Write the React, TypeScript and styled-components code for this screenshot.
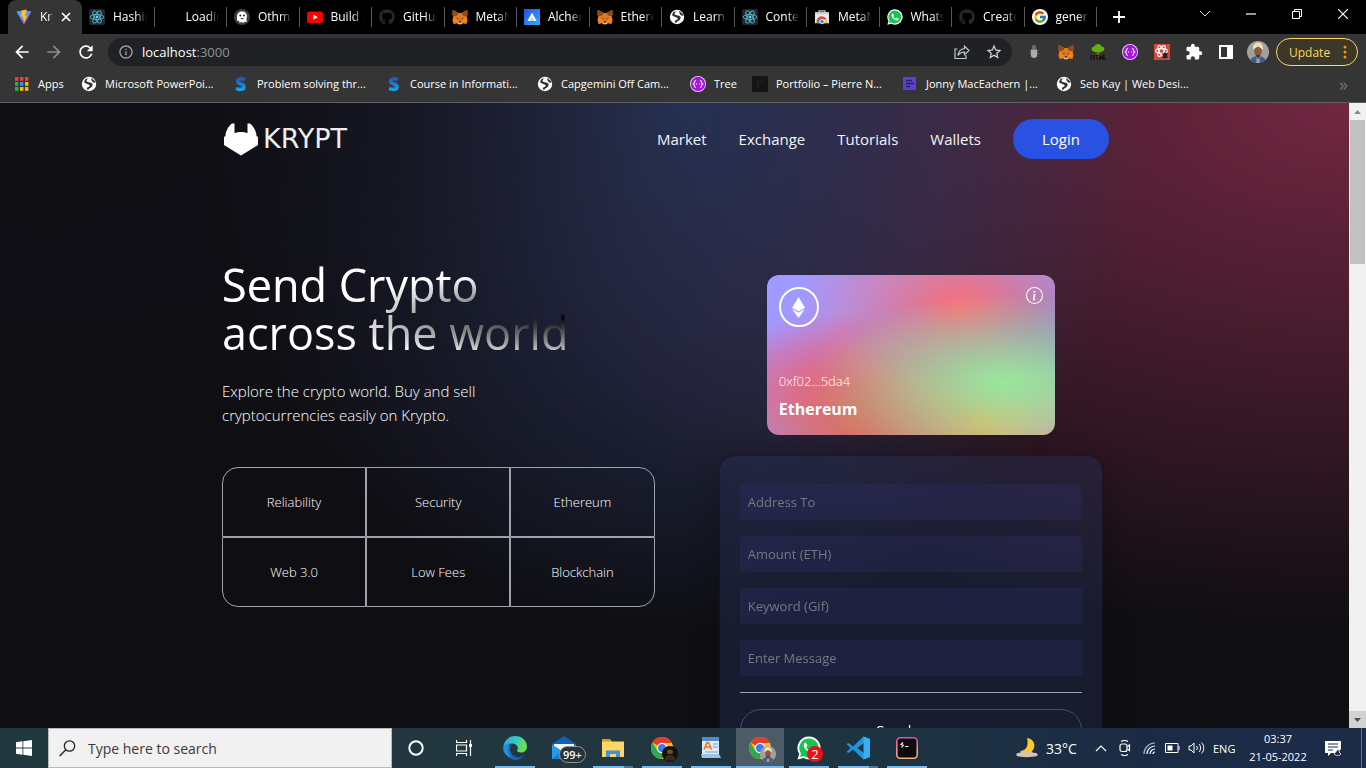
import React from "react";
import styled, { createGlobalStyle, css } from "styled-components";
import { MdArrowBack, MdArrowForward, MdExtension, MdInfoOutline, MdRefresh, MdStarBorder } from "react-icons/md";
import { FaGithub } from "react-icons/fa";
import { FcGoogle } from "react-icons/fc";
import { BsInfoCircle } from "react-icons/bs";
import { SiEthereum } from "react-icons/si";

const GlobalStyle = createGlobalStyle`
  * { box-sizing: border-box; }
  html, body { margin: 0; padding: 0; }
  body {
    background: #0f0e13;
    font-family: "Open Sans", "Noto Sans", sans-serif;
    color: #fff;
    overflow: hidden;
  }
  button, input { font: inherit; color: inherit; }
  button { padding: 0; border: 0; background: none; }
  a { color: inherit; text-decoration: none; }
  ul { list-style: none; margin: 0; padding: 0; }
  svg { display: block; flex: none; }
`;

/* ---------- icons ---------- */

type IconProps = { size?: number };

const ViteIcon = ({ size = 16 }: IconProps) => (
  <svg width={size} height={size} viewBox="0 0 16 16">
    <defs>
      <linearGradient id="vite" x1="0" y1="0" x2="0.6" y2="1">
        <stop offset="0" stopColor="#41b5f5" />
        <stop offset="1" stopColor="#a855f7" />
      </linearGradient>
    </defs>
    <path d="M0.5 2.5 8 1.5l7.5 1L8 15.5z" fill="url(#vite)" />
    <path d="M10.8 0.5 5.6 1.6 5.2 8l2-.4-.5 3.2 1.4-.5-.3 3.7 3.4-7.4-2.1.4z" fill="#ffc61a" />
  </svg>
);

const ReactIcon = ({ size = 16 }: IconProps) => (
  <svg width={size} height={size} viewBox="0 0 16 16">
    <rect width="16" height="16" rx="2" fill="#24282c" />
    <g fill="none" stroke="#4fb6cf" strokeWidth="0.9">
      <ellipse cx="8" cy="8" rx="6.8" ry="2.6" />
      <ellipse cx="8" cy="8" rx="6.8" ry="2.6" transform="rotate(60 8 8)" />
      <ellipse cx="8" cy="8" rx="6.8" ry="2.6" transform="rotate(120 8 8)" />
    </g>
    <circle cx="8" cy="8" r="1.4" fill="#61dafb" />
  </svg>
);

const GhostIcon = () => (
  <svg width="16" height="16" viewBox="0 0 16 16">
    <circle cx="8" cy="8" r="8" fill="#3d4043" />
    <path d="M3 8c0-3.4 2-5.4 5-5.4s5 2 5 5.4l-.6 1.6.4 3.6-2-.8-1.4 1.6L7.6 13l-2 1-.6-2.6L3 12z" fill="#fff" />
    <circle cx="6.3" cy="6.6" r="1" fill="#222" />
    <circle cx="10" cy="6.6" r="1" fill="#222" />
    <path d="M6.4 9h3.4l-1.6 1.4z" fill="#222" />
  </svg>
);

const YoutubeIcon = () => (
  <svg width="16" height="16" viewBox="0 0 16 16">
    <rect y="2.5" width="16" height="11.5" rx="2.6" fill="#f00" />
    <path d="M6.3 5.6v5.2L10.8 8.2z" fill="#fff" />
  </svg>
);

const FoxIcon = ({ size = 16 }: IconProps) => (
  <svg width={size} height={size} viewBox="0 0 16 16">
    <path d="M0.8 0.8 6.4 4h3.2l5.6-3.2.4 4.6-.9 2.2.9 3.6-1.2 4-3.4-1-1.4 1.2H6.4L5 14.2l-3.4 1-1.2-4 .9-3.6L.4 5.4z" fill="#e2761b" />
    <path d="M0.8 0.8 6.4 4 5 6.4 1.4 7.2.4 5.4zM15.2.8 9.6 4 11 6.4l3.6.8 1-1.8z" fill="#8c4a1d" />
    <path d="M1.6 8.4 5 10.4l1.4 4.2L1.6 13zM14.4 8.4 11 10.4l-1.4 4.2 4.8-1.6z" fill="#f6851b" />
    <path d="M4 8.8l2.4.6.2 1.2zM12 8.8l-2.4.6-.2 1.2z" fill="#2b2f3a" />
    <path d="M6.2 12.4h3.6l.2 1.8-.8.8H6.8l-.8-.8z" fill="#d7c1b3" />
    <path d="M6.8 12.2h2.4l.2 1.2H6.6z" fill="#161616" />
  </svg>
);

const AlchemyIcon = () => (
  <svg width="16" height="16" viewBox="0 0 16 16">
    <defs>
      <linearGradient id="alchemy" x1="0" y1="0" x2="1" y2="1">
        <stop offset="0" stopColor="#2f49f0" />
        <stop offset="1" stopColor="#22b4f5" />
      </linearGradient>
    </defs>
    <rect width="16" height="16" fill="url(#alchemy)" />
    <path d="M8 3.4 12.6 12h-3L8 8.6 6.4 12h-3z" fill="#fff" />
    <path d="M6 12 8 8.8l2 3.2z" fill="#b8d4ff" />
  </svg>
);

const GlobeIcon = ({ size = 16 }: IconProps) => (
  <svg width={size} height={size} viewBox="0 0 16 16">
    <circle cx="8" cy="8" r="7.2" fill="#fff" />
    <path d="M8.4 2.4c-2 .2-3.2 1.6-2.8 3l2.2.8c1.4.2 3.2.4 3.8 1.8.2 2-1 3.6-3.4 4.4l-.8 1.4-1.6-.4.4-2 2.6-1.2-.6-1.4-4.8-2-.2-1.4 1.4-2.6z" fill="#303236" />
    <path d="M10.2 1.8 14 5.2l.4 1.6-2.2-.4-1.6-1.6z" fill="#303236" />
  </svg>
);

const StoreIcon = () => (
  <svg width="16" height="16" viewBox="0 0 16 16">
    <path d="M5 3.4V1.8h6v1.6" fill="none" stroke="#c8cacd" strokeWidth="1.2" />
    <path d="M1 3.2h14v11H1z" fill="#e8eaed" />
    <path d="M1 3.2h14v2H1z" fill="#c9ccd1" />
    <path d="M3 14.2a5 5 0 0 1 9.6-3.6H8z" fill="#ea4335" />
    <path d="M3.2 10 6 14.2H3a5 5 0 0 1 .2-4.2z" fill="#34a853" />
    <path d="M12.6 10.6a5 5 0 0 1 .4 3.6H9.4z" fill="#fbbc05" />
    <circle cx="8" cy="12.6" r="2.2" fill="#4285f4" stroke="#fff" strokeWidth="0.8" />
  </svg>
);

const WhatsappIcon = ({ size = 16 }: IconProps) => (
  <svg width={size} height={size} viewBox="0 0 24 24">
    <path d="M12 0.4A11.5 11.5 0 0 0 2.2 17.9L0.5 23.6l6-1.6A11.5 11.5 0 1 0 12 .4z" fill="#fff" />
    <path d="M12 2.4A9.6 9.6 0 0 0 4 17.4l-1 3.7 3.8-1A9.6 9.6 0 1 0 12 2.4z" fill="#16c450" />
    <path d="M8.6 6.6c-.9.1-2.1 1.2-1.8 3.2.6 3.4 4.4 6.9 7.9 7.5 1.6.2 3-.9 3.1-2.6l-3.1-1.6-1.5 1.4c-1.8-.6-3.2-2-3.9-3.6l1.2-1.5z" fill="#fff" />
  </svg>
);

const GoogleBadge = () => (
  <svg width="16" height="16" viewBox="0 0 16 16">
    <circle cx="8" cy="8" r="8" fill="#fff" />
    <g transform="translate(1 1)"><FcGoogle size={14} /></g>
  </svg>
);

const AppsIcon = () => (
  <svg width="16" height="14" viewBox="-1 0 16 14">
    {["#ea4335", "#ea4335", "#ea4335", "#34a853", "#4285f4", "#fbbc05", "#34a853", "#fbbc05", "#fbbc05"].map((fill, i) => (
      <rect key={i} x={(i % 3) * 5} y={Math.floor(i / 3) * 5} width="3.4" height="3.8" fill={fill} />
    ))}
  </svg>
);

const SwayIcon = () => (
  <svg width="16" height="16" viewBox="0 0 16 16">
    <defs>
      <linearGradient id="sway" x1="0" y1="0" x2="0" y2="1">
        <stop offset="0" stopColor="#2457b8" />
        <stop offset="1" stopColor="#0fa5ea" />
      </linearGradient>
    </defs>
    <path d="M11.8 3.8C10 2.400 4.800 2 4.600 5.200 4.300 8 11.200 7.600 11 10.800 10.800 14 5.600 13.800 3.200 12.200" fill="none" stroke="url(#sway)" strokeWidth="3.600" />
  </svg>
);

const TreeIcon = () => (
  <svg width="16" height="16" viewBox="0 0 16 16">
    <circle cx="8" cy="8" r="8" fill="#f0d8fb" />
    <circle cx="8" cy="8" r="7.200" fill="#a714e6" />
    <path d="M5.800 4.400c-1.600 0-1 3-2.400 3.600 1.400.6.800 3.600 2.400 3.600M10.200 4.400c1.600 0 1 3 2.400 3.600-1.400.6-.8 3.600-2.400 3.600M6 8h1M9 8h1" fill="none" stroke="#fff" strokeWidth="1.100" />
  </svg>
);

const PortfolioIcon = () => (
  <svg width="16" height="16" viewBox="0 0 16 16">
    <rect width="16" height="16" fill="#151515" />
    <path d="M6 4v8M9 4c2 0 2 3 0 3" stroke="#2c2c2c" fill="none" />
  </svg>
);

const JonnyIcon = () => (
  <svg width="16" height="14" viewBox="-1 0 16 14">
    <rect width="13" height="13" rx="1" fill="#5b3fd6" />
    <path d="M3 3.500h6M3 6.500h8M3 9.500h4" stroke="#26244a" strokeWidth="1.600" />
  </svg>
);

const ShareIcon = () => (
  <svg width="18" height="18" viewBox="0 0 18 18" fill="none" stroke="#c4c7c9" strokeWidth="1.200">
    <path d="M4.500 6H2v9.500h11V12" />
    <path d="M11.500 3.200 16 7.500l-4.500 4.200V9.200C8.500 9.200 6.500 10.200 5 12.500c.4-4 3-6.600 6.500-7z" />
  </svg>
);

const BugIcon = () => (
  <svg width="16" height="16" viewBox="0 0 16 16">
    <path d="M3 6.500h10M2.500 9.500h11M4 12.500h8" stroke="#4b4d50" />
    <circle cx="8" cy="3.200" r="2.200" fill="#6c6e70" />
    <path d="M4.800 5.500h6.400v5c0 2-1.400 3.500-3.200 3.500s-3.200-1.500-3.200-3.500z" fill="#a9abad" />
  </svg>
);

const HtmlTreeIcon = () => (
  <svg width="16" height="16" viewBox="0 0 16 16">
    <path d="M7 6h2l.5 7h-3z" fill="#8a5a2b" />
    <path d="M8 0c2.400 0 3.400 1.400 3.400 2.600 1.800-.2 3 1 3 2.400S13 7.600 11.600 7.400C10.600 9 9 8.600 8 7.800 7 8.800 5 8.800 4.400 7.400 2.800 7.600 1.600 6.600 1.600 5s1.400-2.600 3-2.400C4.600 1.200 6 0 8 0z" fill="#5cb413" />
    <path d="M1 11v5M1 13.500h3M4 11v5M5.500 11.500h3M7 11.500V16M9.500 16v-4l1.500 2 1.500-2v4M14 11v4.500h2" fill="none" stroke="#111" strokeWidth="1.200" />
  </svg>
);

const DevtoolsIcon = () => (
  <svg width="16" height="16" viewBox="0 0 16 16">
    <rect width="16" height="16" fill="#d8453b" />
    <g fill="none" stroke="#fff" strokeWidth="1.100">
      <ellipse cx="7.500" cy="7" rx="6" ry="2.400" />
      <ellipse cx="7.500" cy="7" rx="6" ry="2.400" transform="rotate(60 7.500 7)" />
      <ellipse cx="7.500" cy="7" rx="6" ry="2.400" transform="rotate(120 7.500 7)" />
    </g>
    <ellipse cx="11" cy="11.400" rx="2.200" ry="3" fill="#222" />
    <path d="M7.800 9.500 14 13.500M7.800 13.500 14 9.500" stroke="#222" />
  </svg>
);

const PanelIcon = () => (
  <svg width="14" height="14" viewBox="0 0 14 14">
    <path d="M0 0h14v14H0zM2 2v10h6V2z" fill="#fff" fillRule="evenodd" />
  </svg>
);

const PersonIcon = ({ size = 22 }: IconProps) => (
  <svg width={size} height={size} viewBox="0 0 22 22">
    <defs><clipPath id="person"><circle cx="11" cy="11" r="11" /></clipPath></defs>
    <g clipPath="url(#person)">
      <rect width="22" height="22" fill="#a3a19d" />
      <path d="M3 22c0-5 3.500-7 8-7s8 2 8 7z" fill="#3d5d94" />
      <path d="M9.500 15.500 11 19l1.500-3.500V22h-3z" fill="#b9a596" />
      <ellipse cx="11" cy="10.500" rx="3.800" ry="5" fill="#8b5a3c" />
      <path d="M6 8.500C5.500 4 8 1.500 11 1.500s5.500 2.500 5 7L11 5.500z" fill="#efe0b4" />
      <path d="M8.500 13.500c1.500 1 3.500 1 5 0L11 16.500z" fill="#3c261c" />
    </g>
  </svg>
);

const ChromeIcon = () => (
  <svg width="22" height="22" viewBox="0 0 24 24">
    <circle cx="12" cy="12" r="12" fill="#fbc116" />
    <path d="M12 12 1.600 6A12 12 0 0 1 22.400 6z" fill="#e33b2e" />
    <path d="M1.600 6A12 12 0 0 0 12 24l5-9.200L12 12 6.900 15z" fill="#2da94f" />
    <path d="M22.400 6.500H12L17.200 15 12 24A12 12 0 0 0 22.400 6.500z" fill="#fbc116" />
    <circle cx="12" cy="12" r="5.600" fill="#fff" />
    <circle cx="12" cy="12" r="4.400" fill="#3b7ded" />
  </svg>
);

const DarkPersonIcon = () => (
  <svg width="16" height="16" viewBox="0 0 16 16">
    <circle cx="8" cy="8" r="8" fill="#15110e" />
    <path d="M5 5c1-2 5-2 6 0l-.6 3H5.600z" fill="#6d4a33" />
    <path d="M2.500 13c1-3 3-4 5.500-4s4.500 1 5.500 4l-2 1.500h-7z" fill="#3c2a20" />
  </svg>
);

const EdgeIcon = () => (
  <svg width="24" height="24" viewBox="0 0 24 24">
    <defs>
      <linearGradient id="edgeTop" x1="0" y1="0" x2="1" y2="0.300">
        <stop offset="0" stopColor="#2aa7e8" />
        <stop offset="0.600" stopColor="#37c9c0" />
        <stop offset="1" stopColor="#6be04f" />
      </linearGradient>
      <linearGradient id="edgeLow" x1="0" y1="0" x2="1" y2="1">
        <stop offset="0" stopColor="#1c88d9" />
        <stop offset="1" stopColor="#0f4f9e" />
      </linearGradient>
    </defs>
    <path d="M0.200 11C1 4.500 6 0 12 0c7 0 12 5 12 10.500 0 4-3 6-6 6-2.500 0-4-1-4-2 0-.6.800-1 .8-2.600 0-2-2.200-4.400-5.800-4.400C5 7.500 1.500 9 .2 11z" fill="url(#edgeTop)" />
    <path d="M0.200 11C1.500 8.500 5 7 8.500 7c-2.500 1.500-3 4-3 6 0 6 5 9.500 9.500 9.500A12 12 0 0 1 0 12z" fill="#1f8fe0" />
    <path d="M8.500 9.500C7 11 6.500 13 7 15c1 4 5 6.500 9 6 2-.2 4-1.200 5.600-2.600-1.600 3.600-5.600 5.600-9.600 5.600C6.500 24 5 17 5.500 13.500 5.800 11 7 10 8.500 9.500z" fill="url(#edgeLow)" />
  </svg>
);

const MailIcon = () => (
  <svg width="26" height="24" viewBox="0 0 26 24">
    <path d="M1 8 13 0l12 8v15H1z" fill="#0f64b5" />
    <path d="M3 8h20v9H3z" fill="#f4f8fc" />
    <path d="M1 8.500 13 16 25 8.500V23H1z" fill="#2a9be8" />
    <path d="M1 23 11 14.500 13 16l2-1.500L25 23z" fill="#1a7fd0" />
  </svg>
);

const FolderIcon = () => (
  <svg width="22" height="20" viewBox="0 0 22 20">
    <path d="M0 1h8l2 2.500V7H0z" fill="#dd9a16" />
    <path d="M0 3.500h22V19H0z" fill="#fcd667" />
    <path d="M4 19v-6.500h14V19h-4v-3H8v3z" fill="#3f92d6" />
  </svg>
);

const WordpadIcon = () => (
  <svg width="20" height="22" viewBox="0 0 20 22">
    <rect x="1" y="0" width="17" height="20" fill="#dfebf6" />
    <rect x="1" y="0" width="17" height="4" fill="#4d8fc4" />
    <path d="M3 12.500 6 5.500h1.500l3 7M4.500 10h4.500" stroke="#e8742a" strokeWidth="1.600" fill="none" />
    <path d="M12 7h5M12 10h5M4 15h13" stroke="#6fa3cf" strokeWidth="1.200" />
    <path d="M0 17h18l2 4H1z" fill="#9fc3e0" />
  </svg>
);

const CodeIcon = () => (
  <svg width="24" height="24" viewBox="0 0 24 24">
    <path d="M17.500 0.500 24 3v18l-6.500 2.500L7 13.600 2.600 17 .5 16 4.600 12 .5 8l2.100-1L7 10.400zM18 7l-6.500 5L18 17z" fill="#1f93dc" fillRule="evenodd" />
    <path d="M17.500 0.500 24 3v18l-6.500 2.500z" fill="#3badf2" />
  </svg>
);

const TerminalIcon = () => (
  <svg width="22" height="22" viewBox="0 0 22 22">
    <defs>
      <linearGradient id="term" x1="0" y1="0" x2="0" y2="1">
        <stop offset="0" stopColor="#f048a8" />
        <stop offset="1" stopColor="#f2b27a" />
      </linearGradient>
    </defs>
    <rect x="0.800" y="0.800" width="20.400" height="20.400" rx="3.500" fill="#0c0c10" stroke="url(#term)" strokeWidth="1.600" />
    <path d="M7 5.500 5 7.500l2.400.8L5.400 10.500M9 9.500h3.500" stroke="#fff" strokeWidth="1.100" fill="none" />
  </svg>
);

const LogoMark = () => (
  <svg width="34" height="33" viewBox="0 0 34 33">
    <path d="M8 0.500h2.500v9.500C14 8.500 20 8.500 23.500 10V.5H26c3.500 2.500 6.500 8 6.500 12.500l1.500 1v8L17 32.500 0 22v-8l1.500-1C1.500 8.500 4.500 3 8 .5z" fill="#fff" />
  </svg>
);

/* ---------- browser frame ---------- */

const Screen = styled.div`
  height: 100vh;
  display: flex;
  flex-direction: column;
  overflow: hidden;
`;

const TabStrip = styled.header`
  display: flex;
  align-items: stretch;
  height: 34px;
  padding-left: 8px;
  background: #000;
`;

const Tabs = styled.ul`
  display: flex;
  flex: 1;
  max-width: 1089px;
`;

const Tab = styled.li<{ $active?: boolean }>`
  display: flex;
  align-items: center;
  gap: 8px;
  min-width: 0;
  position: relative;
  ${(p) =>
    p.$active
      ? css`
          flex: none;
          width: 74px;
          padding: 0 11px 0 8px;
          background: #353535;
          border-radius: 8px 8px 0 0;
        `
      : css`
          flex: 1 1 0;
          padding: 0 8px 0 7px;
          &::after {
            content: "";
            position: absolute;
            right: 0;
            top: 7px;
            width: 1px;
            height: 20px;
            background: #55585c;
          }
        `}
`;

const TabLink = styled.a`
  flex: 1;
  min-width: 0;
  overflow: hidden;
  white-space: nowrap;
  font-size: 12px;
  line-height: 16px;
  mask-image: linear-gradient(90deg, #000 65%, transparent);
`;

const TabIconSlot = styled.span`
  width: 16px;
  height: 16px;
  flex: none;
`;

const IconButton = styled.button<{ $w?: number }>`
  display: flex;
  align-items: center;
  justify-content: center;
  flex: none;
  width: ${(p) => p.$w ?? 32}px;
`;

const WindowControls = styled.div`
  display: flex;
  height: 28px;
  margin-left: auto;
`;

const Toolbar = styled.div`
  display: flex;
  align-items: center;
  height: 36px;
  padding: 0 8px 0 6px;
  background: #353535;
`;

const AddressBar = styled.form`
  display: flex;
  flex: 1;
  align-items: center;
  gap: 8px;
  height: 28px;
  margin: 0 6px;
  padding: 0 6px 0 10px;
  border-radius: 14px;
  background: #202124;
`;

const AddressField = styled.label`
  position: relative;
  flex: 1;
  font-size: 13px;
  line-height: 20px;
`;

const AddressInput = styled.input`
  width: 100%;
  border: 0;
  outline: 0;
  padding: 0;
  background: none;
  color: transparent;
  caret-color: #fff;
  line-height: 20px;
`;

const AddressText = styled.span`
  position: absolute;
  inset: 0;
  pointer-events: none;
  span { color: #8f9295; }
`;

const UpdateButton = styled.button`
  display: flex;
  align-items: center;
  justify-content: space-between;
  width: 82px;
  height: 28px;
  margin-left: 2px;
  padding: 0 10px 0 12px;
  border: 1px solid #fdd663;
  border-radius: 14px;
  background: #3c3729;
  color: #fdd663;
  font-size: 12px;
`;

const BookmarkBar = styled.nav`
  display: flex;
  align-items: center;
  height: 33px;
  padding: 0 18px 4px 14px;
  border-bottom: 1px solid #5f6062;
  background: #353535;
`;

const Bookmark = styled.a<{ $w: number }>`
  display: flex;
  align-items: center;
  gap: 8px;
  width: ${(p) => p.$w}px;
  flex: none;
  white-space: nowrap;
  font-size: 11px;
  font-weight: 500;
  line-height: 16px;
`;

const Chevrons = styled.button`
  margin-left: auto;
  color: #6f7174;
  font-size: 18px;
  line-height: 16px;
`;

/* ---------- page ---------- */

const Viewport = styled.div`
  display: flex;
  flex: 1;
  min-height: 0;
`;

const Page = styled.div`
  flex: 1;
  min-width: 0;
  overflow: hidden;
`;

const Welcome = styled.div`
  background-color: #0f0e13;
  background-image:
    radial-gradient(at 0% 0%, hsl(253, 16%, 7%) 0, transparent 50%),
    radial-gradient(at 50% 0%, hsl(225, 39%, 30%) 0, transparent 50%),
    radial-gradient(at 100% 0%, hsl(339, 49%, 30%) 0, transparent 50%);
`;

const SiteNav = styled.nav`
  display: flex;
  align-items: center;
  justify-content: space-between;
  max-width: 1065px;
  height: 72px;
  margin: 0 auto;
  padding: 0 98px 0 82px;
`;

const Logo = styled.a`
  display: flex;
  align-items: center;
  gap: 5px;
  font-family: "DejaVu Sans", sans-serif;
  font-size: 27px;
  line-height: 32px;
  color: #eee;
`;

const SiteLinks = styled.ul`
  display: flex;
  align-items: center;
  gap: 32px;
  font-size: 15px;
  font-weight: 500;
  line-height: 24px;
  color: #f4f4f6;
`;

const LoginButton = styled.button`
  width: 96px;
  height: 40px;
  border-radius: 20px;
  background: #2952e3;
  color: #fff;
`;

const Hero = styled.main`
  display: flex;
  align-items: flex-start;
  gap: 40px;
  max-width: 1065px;
  margin: 0 auto;
  padding: 80px;
`;

const Column = styled.section<{ $center?: boolean }>`
  display: flex;
  flex: 1 1 0;
  min-width: 0;
  flex-direction: column;
  align-items: ${(p) => (p.$center ? "center" : "flex-start")};
`;

const Title = styled.h1`
  margin: 0;
  padding: 6px 0 2px;
  font-size: 45px;
  font-weight: 400;
  line-height: 48px;
  color: transparent;
  background-color: #fff;
  background-image:
    radial-gradient(at 4% 36%, #fff 0, transparent 53%),
    radial-gradient(at 100% 60%, #000 0, transparent 50%);
  background-clip: text;
  -webkit-background-clip: text;
`;

const Lead = styled.p`
  margin: 20px 0 40px;
  font-size: 15px;
  font-weight: 300;
  line-height: 24px;
`;

const Features = styled.ul`
  display: grid;
  grid-template-columns: repeat(3, 1fr);
  width: 100%;
`;

const Feature = styled.li<{ $corner?: string }>`
  display: flex;
  align-items: center;
  justify-content: center;
  min-height: 70px;
  border: 1px solid #9ca3af;
  border-radius: ${(p) => p.$corner ?? "0"};
  font-size: 13px;
  font-weight: 300;
`;

const EthCard = styled.article`
  display: flex;
  flex-direction: column;
  justify-content: space-between;
  width: 288px;
  height: 160px;
  margin: 20px 0;
  padding: 12px;
  border-radius: 12px;
  background-color: #a099ff;
  background-image:
    radial-gradient(at 83% 67%, rgb(152, 231, 156) 0, transparent 58%),
    radial-gradient(at 67% 20%, hsl(357, 94%, 71%) 0, transparent 59%),
    radial-gradient(at 88% 35%, hsl(222, 81%, 65%) 0, transparent 50%),
    radial-gradient(at 31% 91%, hsl(9, 61%, 61%) 0, transparent 52%),
    radial-gradient(at 27% 71%, hsl(336, 91%, 65%) 0, transparent 49%),
    radial-gradient(at 74% 89%, hsl(30, 98%, 65%) 0, transparent 51%),
    radial-gradient(at 53% 75%, hsl(174, 94%, 68%) 0, transparent 45%);
`;

const CardTop = styled.div`
  display: flex;
  justify-content: space-between;
  align-items: flex-start;
`;

const EthRing = styled.span`
  display: flex;
  align-items: center;
  justify-content: center;
  width: 40px;
  height: 40px;
  border: 2px solid #fff;
  border-radius: 50%;
`;

const Account = styled.p`
  margin: 0;
  font-size: 13px;
  font-weight: 300;
  line-height: 20px;
`;

const CardName = styled.h2`
  margin: 4px 0 0;
  font-size: 16px;
  font-weight: 700;
  line-height: 28px;
`;

const SendForm = styled.form`
  width: 384px;
  max-width: 100%;
  padding: 20px;
  border: 1px solid rgba(0, 0, 0, 0.3);
  border-radius: 16px;
  background: rgba(39, 51, 89, 0.4);
  box-shadow: 0 4px 30px rgba(0, 0, 0, 0.2);
  backdrop-filter: blur(5px);
`;

const Field = styled.input`
  display: block;
  width: 100%;
  height: 36px;
  margin: 8px 0 16px;
  padding: 8px;
  border: 0;
  border-radius: 2px;
  outline: 0;
  background: rgba(45, 51, 106, 0.3);
  font-size: 13px;
  line-height: 20px;
  &::placeholder { color: #757983; opacity: 1; }
`;

const Rule = styled.hr`
  height: 1px;
  margin: 16px 0;
  border: 0;
  background: #9ca3af;
`;

const SendButton = styled.button`
  display: block;
  width: 100%;
  height: 42px;
  border: 1px solid #3d4f7c;
  border-radius: 21px;
  font-size: 15px;
  font-weight: 500;
  line-height: 24px;
`;

const ScrollTrack = styled.aside`
  display: flex;
  flex-direction: column;
  width: 17px;
  flex: none;
  background: #f1f1f1;
`;

const ScrollArrow = styled.button<{ $shade?: boolean }>`
  display: flex;
  align-items: center;
  justify-content: center;
  height: 17px;
  margin-top: ${(p) => (p.$shade ? "auto" : "0")};
  background: ${(p) => (p.$shade ? "#d2d2d2" : "none")};
`;

const ScrollThumb = styled.div`
  height: 23%;
  margin: 0 1px;
  background: #c1c1c1;
`;

/* ---------- taskbar ---------- */

const TaskBar = styled.footer`
  display: flex;
  height: 40px;
  flex: none;
  background: linear-gradient(90deg, #20383e 0%, #22363f 45%, #1d3341 65%, #1b2a45 85%, #1c2b47 100%);
`;

const SearchBox = styled.label`
  display: flex;
  align-items: center;
  gap: 12px;
  width: 344px;
  height: 40px;
  padding: 0 10px;
  border: 1px solid #b9b9b9;
  background: #f1f1f1;
`;

const SearchInput = styled.input`
  flex: 1;
  min-width: 0;
  padding: 0;
  border: 0;
  outline: 0;
  background: none;
  font-size: 14px;
  &::placeholder { color: #3a3a3a; opacity: 1; }
`;

const Apps = styled.div`
  display: flex;
  gap: 1px;
  padding-left: 3px;
`;

const AppButton = styled.button<{ $state?: "open" | "many" | "active" }>`
  position: relative;
  display: flex;
  align-items: center;
  justify-content: center;
  width: 48px;
  background: ${(p) => (p.$state === "active" ? "#4c5c66" : "none")};
  ${(p) =>
    p.$state &&
    css`
      &::after {
        content: "";
        position: absolute;
        bottom: 0;
        left: ${p.$state === "active" ? 0 : 4}px;
        right: ${p.$state === "active" ? 0 : 4}px;
        height: 2px;
        background: ${p.$state === "many" ? "linear-gradient(90deg, #76b9ed 31px, #4b7697 31px)" : "#76b9ed"};
      }
    `}
`;

const FaceBadge = styled.span`
  position: absolute;
  left: 24px;
  top: 18px;
`;

const MailBadge = styled.span`
  position: absolute;
  left: 19px;
  top: 18px;
  padding: 0 3px;
  border: 1px solid #8b979c;
  border-radius: 9px;
  background: #2a3338;
  font-size: 11px;
  font-weight: 600;
  line-height: 15px;
`;

const CountBadge = styled.span`
  position: absolute;
  left: 22px;
  top: 18px;
  width: 16px;
  border-radius: 50%;
  background: #f00c18;
  font-size: 13px;
  line-height: 16px;
`;

const Tray = styled.div`
  display: flex;
  align-items: center;
  margin-left: auto;
`;

const Weather = styled.button`
  display: flex;
  align-items: center;
  gap: 7px;
  width: 74px;
  font-size: 14px;
`;

const Language = styled.button`
  width: 39px;
  padding-left: 5px;
  text-align: left;
  font-size: 11px;
`;

const Clock = styled.time`
  width: 62px;
  text-align: center;
  font-size: 11px;
  line-height: 18px;
`;

const ShowDesktop = styled.button`
  width: 5px;
  height: 40px;
  margin-left: 4px;
  border-left: 1px solid #66748a;
`;

/* ---------- data ---------- */

const tabs = [
  { label: "Hashir", icon: <ReactIcon /> },
  { label: "Loading", icon: null },
  { label: "Othman", icon: <GhostIcon /> },
  { label: "Build a", icon: <YoutubeIcon /> },
  { label: "GitHub", icon: <FaGithub size={16} color="#24292e" /> },
  { label: "MetaMask", icon: <FoxIcon /> },
  { label: "Alchemy", icon: <AlchemyIcon /> },
  { label: "Ethereum", icon: <FoxIcon /> },
  { label: "Learning", icon: <GlobeIcon /> },
  { label: "Context", icon: <ReactIcon /> },
  { label: "MetaMask", icon: <StoreIcon /> },
  { label: "WhatsApp", icon: <WhatsappIcon /> },
  { label: "Create a", icon: <FaGithub size={16} color="#24292e" /> },
  { label: "general", icon: <GoogleBadge /> },
];

const bookmarks = [
  { label: "Apps", icon: <AppsIcon />, width: 67 },
  { label: "Microsoft PowerPoi...", icon: <GlobeIcon />, width: 152 },
  { label: "Problem solving thr...", icon: <SwayIcon />, width: 153 },
  { label: "Course in Informati...", icon: <SwayIcon />, width: 151 },
  { label: "Capgemini Off Cam...", icon: <GlobeIcon />, width: 153 },
  { label: "Tree", icon: <TreeIcon />, width: 62 },
  { label: "Portfolio – Pierre N...", icon: <PortfolioIcon />, width: 150 },
  { label: "Jonny MacEachern |...", icon: <JonnyIcon />, width: 154 },
  { label: "Seb Kay | Web Desi...", icon: <GlobeIcon />, width: 152 },
];

const features = [
  { label: "Reliability", corner: "16px 0 0 0" },
  { label: "Security" },
  { label: "Ethereum", corner: "0 16px 0 0" },
  { label: "Web 3.0", corner: "0 0 0 16px" },
  { label: "Low Fees" },
  { label: "Blockchain", corner: "0 0 16px 0" },
];

const fields = ["Address To", "Amount (ETH)", "Keyword (Gif)", "Enter Message"];

const Browser = () => (
  <>
    <TabStrip>
      <Tabs>
        <Tab $active>
          <ViteIcon />
          <TabLink href="#">Krypt</TabLink>
          <IconButton $w={10} aria-label="Close tab">
            <svg width="10" height="10" viewBox="0 0 10 10"><path d="M1 1l8 8M9 1 1 9" stroke="#fff" strokeWidth="1.700" /></svg>
          </IconButton>
        </Tab>
        {tabs.map((t, i) => (
          <Tab key={i}>
            <TabIconSlot>{t.icon}</TabIconSlot>
            <TabLink href="#">{t.label}</TabLink>
          </Tab>
        ))}
      </Tabs>
      <IconButton $w={44} aria-label="New tab">
        <svg width="12" height="12" viewBox="0 0 12 12"><path d="M6 0v12M0 6h12" stroke="#fff" strokeWidth="1.800" /></svg>
      </IconButton>
      <WindowControls>
        <IconButton $w={46} aria-label="Search tabs">
          <svg width="12" height="8" viewBox="0 0 12 8"><path d="M1 1l5 5 5-5" stroke="#ddd" fill="none" /></svg>
        </IconButton>
        <IconButton $w={46} aria-label="Minimize">
          <svg width="10" height="2" viewBox="0 0 10 2"><path d="M0 1h10" stroke="#fff" strokeWidth="1.200" /></svg>
        </IconButton>
        <IconButton $w={46} aria-label="Restore">
          <svg width="10" height="10" viewBox="0 0 10 10" fill="none" stroke="#fff"><path d="M.5 2.500h7v7h-7zM2.500 2.500v-2h7v7h-2" /></svg>
        </IconButton>
        <IconButton $w={46} aria-label="Close">
          <svg width="10" height="10" viewBox="0 0 10 10"><path d="M0 0l10 10M10 0 0 10" stroke="#fff" strokeWidth="1.200" /></svg>
        </IconButton>
      </WindowControls>
    </TabStrip>
    <Toolbar>
      <IconButton aria-label="Back"><MdArrowBack size={20} color="#fff" /></IconButton>
      <IconButton aria-label="Forward"><MdArrowForward size={20} color="#888b8e" /></IconButton>
      <IconButton aria-label="Reload"><MdRefresh size={20} color="#fff" /></IconButton>
      <AddressBar>
        <MdInfoOutline size={16} color="#9aa0a6" />
        <AddressField>
          <AddressInput aria-label="Address" />
          <AddressText>localhost<span>:3000</span></AddressText>
        </AddressField>
        <IconButton $w={24} type="button" aria-label="Share"><ShareIcon /></IconButton>
        <IconButton $w={24} type="button" aria-label="Bookmark"><MdStarBorder size={18} color="#d5d7d9" /></IconButton>
      </AddressBar>
      <IconButton aria-label="Debugger"><BugIcon /></IconButton>
      <IconButton aria-label="MetaMask"><FoxIcon /></IconButton>
      <IconButton aria-label="HTML tree"><HtmlTreeIcon /></IconButton>
      <IconButton aria-label="Tree generator"><TreeIcon /></IconButton>
      <IconButton aria-label="React tools"><DevtoolsIcon /></IconButton>
      <IconButton aria-label="Extensions"><MdExtension size={18} color="#fff" /></IconButton>
      <IconButton aria-label="Side panel"><PanelIcon /></IconButton>
      <IconButton aria-label="Profile"><PersonIcon /></IconButton>
      <UpdateButton>
        Update
        <svg width="4" height="14" viewBox="0 0 4 14" fill="#f29900"><circle cx="2" cy="2" r="1.500" /><circle cx="2" cy="7" r="1.500" /><circle cx="2" cy="12" r="1.500" /></svg>
      </UpdateButton>
    </Toolbar>
    <BookmarkBar aria-label="Bookmarks">
      {bookmarks.map((b) => (
        <Bookmark key={b.label} href="#" $w={b.width}>
          {b.icon}
          {b.label}
        </Bookmark>
      ))}
      <Chevrons aria-label="More bookmarks">»</Chevrons>
    </BookmarkBar>
  </>
);

const KryptPage = () => (
  <Page>
    <Welcome>
      <SiteNav>
        <Logo href="#"><LogoMark />KRYPT</Logo>
        <SiteLinks>
          {["Market", "Exchange", "Tutorials", "Wallets"].map((l) => (
            <li key={l}><a href="#">{l}</a></li>
          ))}
          <li><LoginButton>Login</LoginButton></li>
        </SiteLinks>
      </SiteNav>
      <Hero>
        <Column>
          <Title>Send Crypto<br />across the world</Title>
          <Lead>Explore the crypto world. Buy and sell<br />cryptocurrencies easily on Krypto.</Lead>
          <Features>
            {features.map((f) => (
              <Feature key={f.label} $corner={f.corner}>{f.label}</Feature>
            ))}
          </Features>
        </Column>
        <Column $center>
          <EthCard>
            <CardTop>
              <EthRing><SiEthereum size={21} color="#fff" /></EthRing>
              <BsInfoCircle size={17} color="#fff" />
            </CardTop>
            <div>
              <Account>0xf02...5da4</Account>
              <CardName>Ethereum</CardName>
            </div>
          </EthCard>
          <SendForm>
            {fields.map((f) => (
              <Field key={f} placeholder={f} aria-label={f} />
            ))}
            <Rule />
            <SendButton type="button">Send now</SendButton>
          </SendForm>
        </Column>
      </Hero>
    </Welcome>
  </Page>
);

const WindowsTaskBar = () => (
  <TaskBar>
    <IconButton $w={48} aria-label="Start">
      <svg width="16" height="16" viewBox="0 0 16 16" fill="#fff"><path d="M0 2.200 6.500 1.300v6.200H0zM7.300 1.200 16 0v7.500H7.300zM0 8.400h6.500v6.300L0 13.800zM7.300 8.400H16V16l-8.700-1.200z" /></svg>
    </IconButton>
    <SearchBox>
      <svg width="17" height="17" viewBox="0 0 17 17" fill="none" stroke="#222" strokeWidth="1.300"><circle cx="10.500" cy="6" r="5.200" /><path d="M6.800 9.700.7 16" /></svg>
      <SearchInput placeholder="Type here to search" aria-label="Type here to search" />
    </SearchBox>
    <IconButton $w={48} aria-label="Cortana">
      <svg width="16" height="16" viewBox="0 0 16 16"><circle cx="8" cy="8" r="6.700" fill="none" stroke="#fff" strokeWidth="2" /></svg>
    </IconButton>
    <IconButton $w={48} aria-label="Task view">
      <svg width="17" height="16" viewBox="0 0 17 16" fill="none" stroke="#fff" strokeWidth="1.200"><path d="M.5 0v2.500h10V0M.5 5h10v6H.5zM.5 16v-2.500h10V16M14.500 0v16" /><path d="M13 4h3v3h-3z" fill="#fff" stroke="none" /></svg>
    </IconButton>
    <Apps>
      <AppButton $state="open" aria-label="Edge"><EdgeIcon /></AppButton>
      <AppButton aria-label="Mail"><MailIcon /><MailBadge>99+</MailBadge></AppButton>
      <AppButton $state="many" aria-label="File Explorer"><FolderIcon /></AppButton>
      <AppButton $state="open" aria-label="Chrome"><ChromeIcon /><FaceBadge><DarkPersonIcon /></FaceBadge></AppButton>
      <AppButton $state="open" aria-label="WordPad"><WordpadIcon /></AppButton>
      <AppButton $state="active" aria-label="Chrome, current window"><ChromeIcon /><FaceBadge><PersonIcon size={16} /></FaceBadge></AppButton>
      <AppButton $state="open" aria-label="WhatsApp"><WhatsappIcon size={24} /><CountBadge>2</CountBadge></AppButton>
      <AppButton $state="many" aria-label="Visual Studio Code"><CodeIcon /></AppButton>
      <AppButton $state="open" aria-label="Terminal"><TerminalIcon /></AppButton>
    </Apps>
    <Tray>
      <Weather>
        <svg width="24" height="20" viewBox="0 0 24 20">
          <path d="M12 0c7 1 9 7 6 12-3 4-10 4-13 1 6 0 9-5 7-13z" fill="#fcc92c" />
          <path d="M2 18c-2-2 1-4 3-3 1-3 5-3 6 0 2-3 6-3 7 0 3-1 6 1 4 3-5 1.500-16 1.500-20 0z" fill="#d9c3ae" />
        </svg>
        33°C
      </Weather>
      <IconButton $w={24} aria-label="Hidden icons">
        <svg width="12" height="7" viewBox="0 0 12 7"><path d="M1 6l5-5 5 5" stroke="#fff" strokeWidth="1.200" fill="none" /></svg>
      </IconButton>
      <IconButton $w={24} aria-label="Camera">
        <svg width="12" height="16" viewBox="0 0 12 16" fill="none" stroke="#fff" strokeWidth="1.200"><rect x="1" y="4" width="7" height="7.500" rx="2" /><path d="M8.500 6.500 10.500 5v5.500L8.500 9M2 1.500C4 .3 7 .3 9 1.500M2 14.500c2 1.200 5 1.200 7 0" /></svg>
      </IconButton>
      <IconButton $w={24} aria-label="Network">
        <svg width="13" height="13" viewBox="0 0 13 13" fill="none" stroke="#fff" strokeWidth="1.200"><path d="M1 12A11 11 0 0 1 12 1" stroke="#aab2bd" /><path d="M4 12a8 8 0 0 1 8-8M7 12a5 5 0 0 1 5-5M10 12a2 2 0 0 1 2-2" /></svg>
      </IconButton>
      <IconButton $w={23} aria-label="Battery">
        <svg width="15" height="10" viewBox="0 0 15 10"><path d="M.5.500h12.500v9H.5zM14 3v4" fill="none" stroke="#fff" /><path d="M2.500 2.500h5v5h-5z" fill="#fff" /></svg>
      </IconButton>
      <IconButton $w={24} aria-label="Volume">
        <svg width="17" height="14" viewBox="0 0 17 14" fill="none" stroke="#fff"><path d="M1 5h2l3-3v10L3 9H1zM8.500 5c1 1 1 3 0 4M11 3c2 2 2 6 0 8M13.500 1.500c3 3 3 8 0 11" /></svg>
      </IconButton>
      <Language>ENG</Language>
      <Clock>03:37<br />21-05-2022</Clock>
      <IconButton $w={48} aria-label="Notifications">
        <svg width="17" height="17" viewBox="0 0 17 17"><path d="M0 1h16v8l-4 4H6l-3 3v-3H0z" fill="#fff" /><path d="M3 4h10M3 7h10M3 10h5" stroke="#1b2a45" /><path d="M9 14l4-5c1 1 1.500 2 1 3l2 2c-2 2-5 2-7 0z" fill="#1b2a45" stroke="#fff" strokeWidth="0.800" /></svg>
      </IconButton>
      <ShowDesktop aria-label="Show desktop" />
    </Tray>
  </TaskBar>
);

export default function App() {
  return (
    <Screen>
      <GlobalStyle />
      <Browser />
      <Viewport>
        <KryptPage />
        <ScrollTrack aria-label="Page scroll">
          <ScrollArrow aria-label="Scroll up">
            <svg width="7" height="4" viewBox="0 0 7 4"><path d="M0 4 3.500 0 7 4z" fill="#8b8b8b" /></svg>
          </ScrollArrow>
          <ScrollThumb />
          <ScrollArrow $shade aria-label="Scroll down">
            <svg width="7" height="4" viewBox="0 0 7 4"><path d="M0 0h7L3.500 4z" fill="#4f4f4f" /></svg>
          </ScrollArrow>
        </ScrollTrack>
      </Viewport>
      <WindowsTaskBar />
    </Screen>
  );
}
